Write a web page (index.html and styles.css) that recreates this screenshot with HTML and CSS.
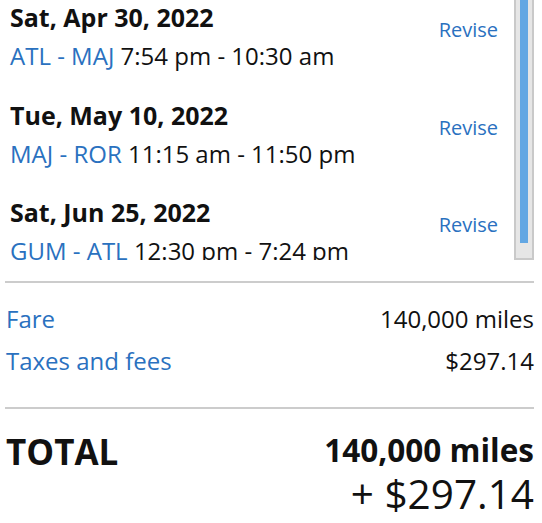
FILE: index.html
```html
<!DOCTYPE html>
<html>
<head>
<meta charset="utf-8">
<link rel="stylesheet" href="styles.css">
</head>
<body>
<div class="page">
  <div class="flights">
    <div class="flight-list">
      <div class="flight">
        <div class="info">
          <div class="date">Sat, Apr 30, 2022</div>
          <div class="route"><span class="codes">ATL - MAJ</span> 7:54 pm - 10:30 am</div>
        </div>
        <a class="revise">Revise</a>
      </div>
      <div class="flight">
        <div class="info">
          <div class="date">Tue, May 10, 2022</div>
          <div class="route"><span class="codes">MAJ - ROR</span> 11:15 am - 11:50 pm</div>
        </div>
        <a class="revise">Revise</a>
      </div>
      <div class="flight">
        <div class="info">
          <div class="date">Sat, Jun 25, 2022</div>
          <div class="route"><span class="codes">GUM - ATL</span> 12:30 pm - 7:24 pm</div>
        </div>
        <a class="revise">Revise</a>
      </div>
    </div>
    <div class="scrollbar"><div class="thumb"></div></div>
  </div>
  <div class="sep sep-top"></div>
  <div class="prices">
    <div class="price-row"><span class="label">Fare</span><span class="value">140,000 miles</span></div>
    <div class="price-row"><span class="label">Taxes and fees</span><span class="value">$297.14</span></div>
  </div>
  <div class="sep sep-bottom"></div>
  <div class="total">
    <div class="total-label">TOTAL</div>
    <div class="total-values">
      <div class="total-miles">140,000 miles</div>
      <div class="total-cash">+ $297.14</div>
    </div>
  </div>
</div>
</body>
</html>
```
FILE: styles.css
```css
html, body {
  margin: 0;
  padding: 0;
  background: #ffffff;
}
body {
  font-family: "Open Sans", "Noto Sans", sans-serif;
  color: #111111;
}
.page {
  padding: 0 8px 0 5px;
}
.flights {
  display: flex;
  height: 260px;
  overflow: hidden;
}
.flight-list {
  flex: 1;
  padding-left: 5px;
}
.flight {
  display: flex;
  justify-content: space-between;
  align-items: flex-start;
  padding-bottom: 24.5px;
}
.date {
  font-size: 25px;
  font-weight: 700;
  line-height: 34px;
}
.route {
  font-size: 24px;
  line-height: 34px;
  margin-top: 5px;
  white-space: nowrap;
}
.codes {
  color: #2a71bf;
}
.revise {
  color: #2a71bf;
  font-size: 20px;
  line-height: 28px;
  margin-top: 16px;
  margin-right: 16px;
}
.scrollbar {
  width: 20px;
  box-sizing: border-box;
  border: 2px solid #c9c9c9;
  border-top: none;
  background: #e6e6e6;
  padding: 0 4px;
}
.thumb {
  height: 243px;
  background: #63a7e3;
}
.sep {
  height: 2px;
  background: #cccccc;
}
.sep-top {
  margin-top: 21px;
}
.prices {
  padding-top: 14.7px;
}
.price-row {
  display: flex;
  justify-content: space-between;
  line-height: 42px;
  font-size: 24px;
}
.label {
  color: #2a71bf;
  padding-left: 1px;
}
.value {
  font-size: 24px;
}
.sep-bottom {
  margin-top: 25.3px;
}
.total {
  display: flex;
  justify-content: space-between;
  align-items: flex-start;
  padding-top: 18.6px;
}
.total-label {
  font-size: 35px;
  font-weight: 700;
  line-height: 48px;
  padding-left: 1px;
}
.total-values {
  text-align: right;
  margin-top: 1px;
}
.total-miles {
  font-size: 31.5px;
  font-weight: 700;
  line-height: 41px;
}
.total-cash {
  font-size: 40.5px;
  line-height: 48px;
}
```
